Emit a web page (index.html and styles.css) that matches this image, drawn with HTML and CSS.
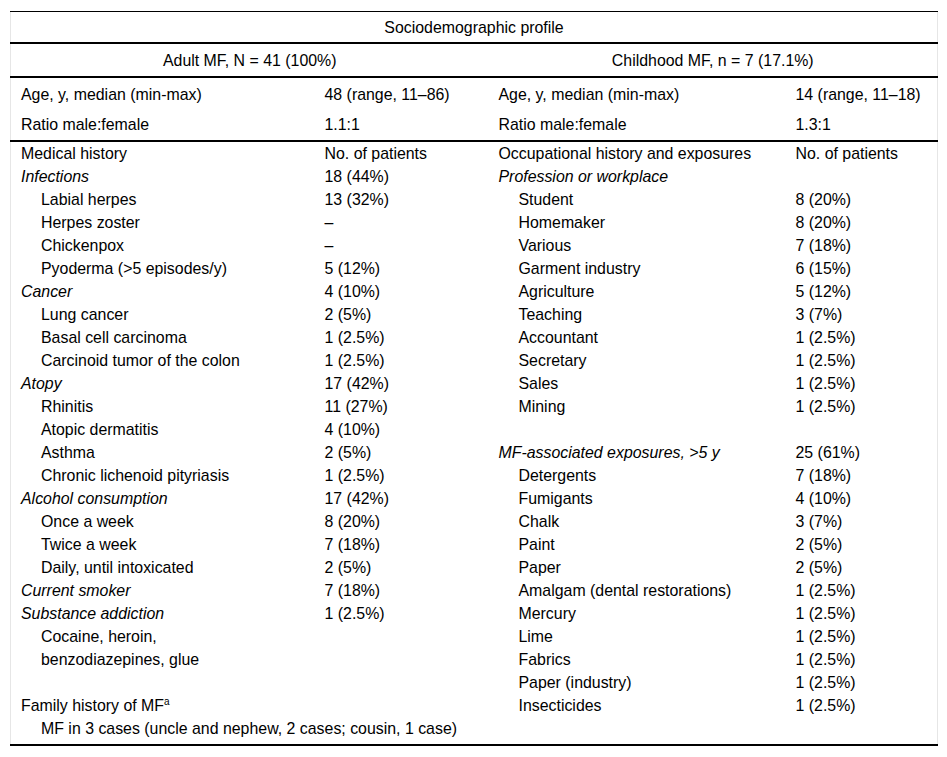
FILE: index.html
```html
<!DOCTYPE html>
<html lang="en">
<head>
<meta charset="utf-8">
<title>Sociodemographic profile</title>
<link rel="stylesheet" href="styles.css">
</head>
<body>
<table class="profile">
  <colgroup>
    <col class="c1"><col class="c2"><col class="c3"><col class="c4">
  </colgroup>
  <thead>
    <tr class="title-row"><th colspan="4">Sociodemographic profile</th></tr>
    <tr class="group-row"><th colspan="2">Adult MF, N = 41 (100%)</th><th colspan="2">Childhood MF, n = 7 (17.1%)</th></tr>
  </thead>
  <tbody class="summary">
    <tr class="age-row"><td>Age, y, median (min-max)</td><td>48 (range, 11–86)</td><td>Age, y, median (min-max)</td><td>14 (range, 11–18)</td></tr>
    <tr class="ratio-row"><td>Ratio male:female</td><td>1.1:1</td><td>Ratio male:female</td><td>1.3:1</td></tr>
  </tbody>
  <tbody class="detail">
    <tr class="first"><td>Medical history</td><td>No. of patients</td><td>Occupational history and exposures</td><td>No. of patients</td></tr>
    <tr><td class="it">Infections</td><td>18 (44%)</td><td class="it">Profession or workplace</td><td></td></tr>
    <tr><td class="ind">Labial herpes</td><td>13 (32%)</td><td class="ind">Student</td><td>8 (20%)</td></tr>
    <tr><td class="ind">Herpes zoster</td><td>–</td><td class="ind">Homemaker</td><td>8 (20%)</td></tr>
    <tr><td class="ind">Chickenpox</td><td>–</td><td class="ind">Various</td><td>7 (18%)</td></tr>
    <tr><td class="ind">Pyoderma (&gt;5 episodes/y)</td><td>5 (12%)</td><td class="ind">Garment industry</td><td>6 (15%)</td></tr>
    <tr><td class="it">Cancer</td><td>4 (10%)</td><td class="ind">Agriculture</td><td>5 (12%)</td></tr>
    <tr><td class="ind">Lung cancer</td><td>2 (5%)</td><td class="ind">Teaching</td><td>3 (7%)</td></tr>
    <tr><td class="ind">Basal cell carcinoma</td><td>1 (2.5%)</td><td class="ind">Accountant</td><td>1 (2.5%)</td></tr>
    <tr><td class="ind">Carcinoid tumor of the colon</td><td>1 (2.5%)</td><td class="ind">Secretary</td><td>1 (2.5%)</td></tr>
    <tr><td class="it">Atopy</td><td>17 (42%)</td><td class="ind">Sales</td><td>1 (2.5%)</td></tr>
    <tr><td class="ind">Rhinitis</td><td>11 (27%)</td><td class="ind">Mining</td><td>1 (2.5%)</td></tr>
    <tr><td class="ind">Atopic dermatitis</td><td>4 (10%)</td><td></td><td></td></tr>
    <tr><td class="ind">Asthma</td><td>2 (5%)</td><td class="it">MF-associated exposures, &gt;5 y</td><td>25 (61%)</td></tr>
    <tr><td class="ind">Chronic lichenoid pityriasis</td><td>1 (2.5%)</td><td class="ind">Detergents</td><td>7 (18%)</td></tr>
    <tr><td class="it">Alcohol consumption</td><td>17 (42%)</td><td class="ind">Fumigants</td><td>4 (10%)</td></tr>
    <tr><td class="ind">Once a week</td><td>8 (20%)</td><td class="ind">Chalk</td><td>3 (7%)</td></tr>
    <tr><td class="ind">Twice a week</td><td>7 (18%)</td><td class="ind">Paint</td><td>2 (5%)</td></tr>
    <tr><td class="ind">Daily, until intoxicated</td><td>2 (5%)</td><td class="ind">Paper</td><td>2 (5%)</td></tr>
    <tr><td class="it">Current smoker</td><td>7 (18%)</td><td class="ind">Amalgam (dental restorations)</td><td>1 (2.5%)</td></tr>
    <tr><td class="it">Substance addiction</td><td>1 (2.5%)</td><td class="ind">Mercury</td><td>1 (2.5%)</td></tr>
    <tr><td class="ind">Cocaine, heroin,</td><td></td><td class="ind">Lime</td><td>1 (2.5%)</td></tr>
    <tr><td class="ind">benzodiazepines, glue</td><td></td><td class="ind">Fabrics</td><td>1 (2.5%)</td></tr>
    <tr><td></td><td></td><td class="ind">Paper (industry)</td><td>1 (2.5%)</td></tr>
    <tr><td>Family history of MF<sup>a</sup></td><td></td><td class="ind">Insecticides</td><td>1 (2.5%)</td></tr>
    <tr class="last"><td class="ind wide" colspan="2">MF in 3 cases (uncle and nephew, 2 cases; cousin, 1 case)</td><td></td><td></td></tr>
  </tbody>
</table>
</body>
</html>
```

FILE: styles.css
```css
html, body {
  margin: 0;
  padding: 0;
  background: #ffffff;
}

body {
  font-family: "Liberation Sans", Arial, sans-serif;
  font-size: 15.9px;
  color: #000000;
}

.profile {
  margin: 11px 0 0 10px;
  width: 927px;
  table-layout: fixed;
  border-collapse: collapse;
  border-left: 1px solid #e6e6e6;
  border-right: 1px solid #e6e6e6;
  border-bottom: 2px solid #000000;
}

.c1 { width: 304px; }
.c2 { width: 174px; }
.c3 { width: 297px; }
.c4 { width: 152px; }

.profile th,
.profile td {
  padding: 0 0 0 10px;
  line-height: 23px;
  text-align: left;
  font-weight: normal;
  vertical-align: top;
  white-space: nowrap;
}

.title-row th {
  border-top: 1px solid #000000;
  border-bottom: 2px solid #000000;
  text-align: center;
  padding: 4px 0 3px 0;
}

.group-row th {
  border-bottom: 2px solid #000000;
  text-align: center;
  padding: 5px 0 4px 0;
}

.age-row td {
  padding-top: 5px;
  padding-bottom: 3px;
}

.ratio-row td {
  padding-top: 4px;
  padding-bottom: 4px;
  border-bottom: 2px solid #000000;
}

.detail .last td {
  padding-bottom: 4px;
}

.profile td.it {
  font-style: italic;
}

.profile td.ind {
  padding-left: 30px;
}

sup {
  font-size: 10px;
  line-height: 0;
  vertical-align: 6px;
}
```
